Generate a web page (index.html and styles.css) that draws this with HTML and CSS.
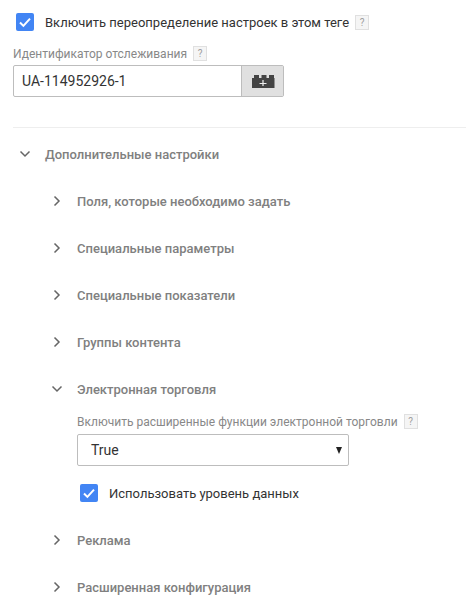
FILE: index.html
```html
<!DOCTYPE html>
<html lang="ru">

<head>
    <meta charset="UTF-8">
    <meta name="viewport" content="width=device-width, initial-scale=1.0">
    <title>Настройки тега</title>
    <link rel="stylesheet" href="styles.css">
</head>

<body>
    <div class="override">
        <span class="checkbox">
            <svg viewBox="0 0 18 18" width="18" height="18"><path d="M4 9.500l3.400 3.400L14 5.600" fill="none" stroke="#fff" stroke-width="2"/></svg>
        </span>
        <span class="check-label">Включить переопределение настроек в этом теге</span>
        <span class="help">?</span>
    </div>

    <div class="tracking">
        <div class="field-label">Идентификатор отслеживания <span class="help">?</span></div>
        <div class="input-group">
            <div class="input-value">UA-114952926-1</div>
            <div class="input-btn">
                <svg viewBox="0 0 24 15" width="24" height="15"><path d="M1 14V4h2V1h5v3h2.500V1h5v3H18V1h5v3h0.500V14z" fill="#444"/><path d="M12 6v6M8.500 9.500h7" stroke="#eee" stroke-width="1.200"/></svg>
            </div>
        </div>
    </div>

    <div class="divider"></div>

    <div class="row row-top">
        <svg class="chev" viewBox="0 0 12 12" width="12" height="12"><path d="M1.500 3.500L6 8l4.500-4.500" fill="none" stroke="#666" stroke-width="1.500"/></svg>
        <span>Дополнительные настройки</span>
    </div>

    <div class="sections">
        <div class="row">
            <svg class="chev" viewBox="0 0 12 12" width="12" height="12"><path d="M3.500 1.500L8 6l-4.500 4.500" fill="none" stroke="#666" stroke-width="1.500"/></svg>
            <span>Поля, которые необходимо задать</span>
        </div>
        <div class="row">
            <svg class="chev" viewBox="0 0 12 12" width="12" height="12"><path d="M3.500 1.500L8 6l-4.500 4.500" fill="none" stroke="#666" stroke-width="1.500"/></svg>
            <span>Специальные параметры</span>
        </div>
        <div class="row">
            <svg class="chev" viewBox="0 0 12 12" width="12" height="12"><path d="M3.500 1.500L8 6l-4.500 4.500" fill="none" stroke="#666" stroke-width="1.500"/></svg>
            <span>Специальные показатели</span>
        </div>
        <div class="row">
            <svg class="chev" viewBox="0 0 12 12" width="12" height="12"><path d="M3.500 1.500L8 6l-4.500 4.500" fill="none" stroke="#666" stroke-width="1.500"/></svg>
            <span>Группы контента</span>
        </div>
        <div class="row">
            <svg class="chev" viewBox="0 0 12 12" width="12" height="12"><path d="M1.500 3.500L6 8l4.500-4.500" fill="none" stroke="#666" stroke-width="1.500"/></svg>
            <span>Электронная торговля</span>
        </div>

        <div class="ecommerce">
            <div class="field-label">Включить расширенные функции электронной торговли <span class="help">?</span></div>
            <div class="select">
                <span>True</span>
                <span class="select-arrow"></span>
            </div>
            <div class="data-layer">
                <span class="checkbox">
                    <svg viewBox="0 0 18 18" width="18" height="18"><path d="M4 9.500l3.400 3.400L14 5.600" fill="none" stroke="#fff" stroke-width="2"/></svg>
                </span>
                <span class="check-label">Использовать уровень данных</span>
            </div>
        </div>

        <div class="row row-after">
            <svg class="chev" viewBox="0 0 12 12" width="12" height="12"><path d="M3.500 1.500L8 6l-4.500 4.500" fill="none" stroke="#666" stroke-width="1.500"/></svg>
            <span>Реклама</span>
        </div>
        <div class="row">
            <svg class="chev" viewBox="0 0 12 12" width="12" height="12"><path d="M3.500 1.500L8 6l-4.500 4.500" fill="none" stroke="#666" stroke-width="1.500"/></svg>
            <span>Расширенная конфигурация</span>
        </div>
    </div>
</body>

</html>
```

FILE: styles.css
```css
body {
    font-family: Roboto, Arial, sans-serif;
    font-size: 13px;
    background-color: white;
    color: #333;
    margin: 0;
    height: 611px;
    overflow: hidden;
}

.override {
    display: flex;
    align-items: center;
    height: 18px;
    padding: 13px 0 0 16px;
}

.checkbox {
    display: block;
    flex: none;
    width: 18px;
    height: 18px;
    background-color: #4285f4;
    border-radius: 2px;
}

.checkbox svg {
    display: block;
}

.check-label {
    margin-left: 11px;
}

.help {
    display: inline-block;
    width: 12px;
    height: 13px;
    margin-left: 6px;
    border: 1px solid #e0e0e0;
    background-color: #f5f5f5;
    color: #9e9e9e;
    font-size: 10px;
    line-height: 13px;
    text-align: center;
    vertical-align: 1px;
}

.tracking {
    padding: 15px 0 0 13px;
}

.field-label {
    height: 16px;
    line-height: 16px;
    color: #888;
    font-size: 12px;
}

.field-label .help {
    margin-left: 3px;
}

.input-group {
    display: flex;
    width: 271px;
    height: 32px;
    margin-top: 3px;
    box-sizing: border-box;
    border: 1px solid #bdbdbd;
    border-radius: 2px;
}

.input-value {
    flex: 1;
    padding-left: 8px;
    line-height: 30px;
    font-size: 14px;
}

.input-btn {
    display: flex;
    align-items: center;
    justify-content: center;
    width: 41px;
    border-left: 1px solid #bdbdbd;
    background-color: #e0e0e0;
}

.divider {
    height: 1px;
    margin: 30px 0 0 13px;
    background-color: #eeeeee;
}

.row {
    display: flex;
    align-items: center;
    height: 16px;
    margin-top: 31px;
    color: #808080;
    font-weight: 500;
}

.row-top {
    margin-top: 18px;
    padding-left: 19px;
}

.sections {
    padding-left: 51px;
}

.chev {
    flex: none;
    margin-right: 14px;
}

.ecommerce {
    padding: 17px 0 0 26px;
}

.select {
    display: flex;
    align-items: center;
    justify-content: space-between;
    width: 272px;
    height: 32px;
    margin-top: 4px;
    box-sizing: border-box;
    padding: 0 6px 0 13px;
    border: 1px solid #bdbdbd;
    border-radius: 2px;
    font-size: 14px;
}

.select-arrow {
    width: 0;
    height: 0;
    border-left: 3.500px solid transparent;
    border-right: 3.500px solid transparent;
    border-top: 7px solid #222;
}

.data-layer {
    display: flex;
    align-items: center;
    margin: 18px 0 0 3px;
}

.row-after {
    margin-top: 30px;
}
```
